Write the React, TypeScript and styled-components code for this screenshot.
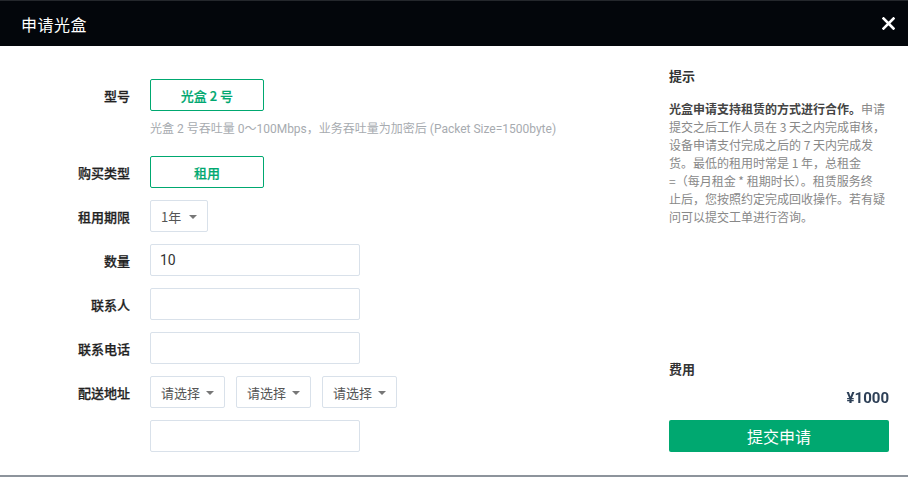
import React from 'react';
import styled, { createGlobalStyle } from 'styled-components';

const GREEN = '#00a870';

const GlobalStyle = createGlobalStyle`
  html, body {
    margin: 0;
    padding: 0;
    background: #ffffff;
  }
  body {
    font-family: "Noto Sans CJK SC", "Noto Sans", sans-serif;
    color: #333;
  }
  * { box-sizing: border-box; }
`;

const Dialog = styled.div`
  width: 908px;
  height: 477px;
  display: flex;
  flex-direction: column;
  background: #fff;
  border-bottom: 2px solid #8d949c;
`;

const Header = styled.div`
  height: 46px;
  flex-shrink: 0;
  background: #03060b;
  border-top: 1px solid #24272c;
  display: flex;
  align-items: center;
  justify-content: space-between;
  padding: 0 12px 0 21px;
`;

const Title = styled.div`
  color: #fff;
  font-size: 16px;
  letter-spacing: 0.5px;
`;

const Close = styled.button`
  background: none;
  border: none;
  padding: 0;
  width: 16px;
  height: 16px;
  display: flex;
  align-items: center;
  justify-content: center;
  cursor: pointer;
`;

const Body = styled.div`
  flex: 1;
  display: flex;
  justify-content: space-between;
  padding: 33px 19px 0 0;
`;

const Form = styled.div`
  display: grid;
  grid-template-columns: 130px auto;
  column-gap: 20px;
  row-gap: 12px;
  align-content: start;
`;

const Label = styled.div`
  height: 32px;
  display: flex;
  align-items: center;
  justify-content: flex-end;
  font-size: 13px;
  font-weight: 500;
  color: #222;
  -webkit-text-stroke: 0.25px #222;
`;

const Field = styled.div`
  display: flex;
  flex-direction: column;
`;

const Choice = styled.div`
  width: 114px;
  height: 32px;
  border: 1px solid ${GREEN};
  border-radius: 2px;
  color: ${GREEN};
  font-size: 13px;
  font-weight: 500;
  -webkit-text-stroke: 0.2px ${GREEN};
  display: flex;
  align-items: center;
  justify-content: center;
`;

const Hint = styled.div`
  margin-top: 8px;
  margin-bottom: 8px;
  font-size: 12px;
  color: #a7abb0;
  font-family: Roboto, "Noto Sans CJK SC", sans-serif;
  white-space: nowrap;
`;

const Input = styled.div`
  width: 210px;
  height: 32px;
  border: 1px solid #d9e1ea;
  border-radius: 2px;
  padding: 0 9px;
  display: flex;
  align-items: center;
  font-size: 14px;
  color: #333;
  font-family: Roboto, "Noto Sans CJK SC", sans-serif;
`;

const Selects = styled.div`
  display: flex;
  gap: 11px;
`;

const Select = styled.div<{ $w: number }>`
  width: ${p => p.$w}px;
  height: 32px;
  border: 1px solid #d9e1ea;
  border-radius: 2px;
  padding: 0 10px;
  display: flex;
  align-items: center;
  justify-content: space-between;
  font-size: 13px;
  color: #555;
`;

const Caret = styled.span`
  width: 0;
  height: 0;
  border-left: 4px solid transparent;
  border-right: 4px solid transparent;
  border-top: 4px solid #777;
  margin-top: 2px;
`;

const Side = styled.div`
  width: 220px;
  display: flex;
  flex-direction: column;
  padding-bottom: 23px;
`;

const SideTitle = styled.div`
  font-size: 13px;
  font-weight: 700;
  color: #333;
  line-height: 20px;
  margin-top: -13px;
`;

const Tip = styled.p`
  margin: 14px 0 0;
  font-size: 12px;
  line-height: 18px;
  color: #888;
  white-space: nowrap;
  b {
    color: #444;
    font-weight: 700;
  }
`;

const Spacer = styled.div`
  flex: 1;
`;

const Price = styled.div`
  text-align: right;
  font-size: 15px;
  font-weight: 700;
  color: #2e4057;
  margin: 10px 0 13px;
  font-family: Roboto, sans-serif;
  filter: blur(0.6px);
`;

const Submit = styled.button`
  width: 220px;
  height: 32px;
  border: none;
  border-radius: 2px;
  background: ${GREEN};
  color: #fff;
  font-size: 16px;
  font-family: "Noto Sans CJK SC", sans-serif;
  cursor: pointer;
`;

export default function App() {
  return (
    <>
      <GlobalStyle />
      <Dialog>
        <Header>
          <Title>申请光盒</Title>
          <Close aria-label="关闭">
            <svg width="13" height="13" viewBox="0 0 13 13">
              <path d="M1.5 1.5 L11.5 11.5 M11.5 1.5 L1.5 11.5" stroke="#fff" strokeWidth="2.6" strokeLinecap="square" />
            </svg>
          </Close>
        </Header>
        <Body>
          <Form>
            <Label>型号</Label>
            <Field>
              <Choice>光盒 2 号</Choice>
              <Hint>光盒 2 号吞吐量 0～100Mbps，业务吞吐量为加密后 (Packet Size=1500byte)</Hint>
            </Field>
            <Label>购买类型</Label>
            <Field>
              <Choice>租用</Choice>
            </Field>
            <Label>租用期限</Label>
            <Field>
              <Select $w={58}>1年<Caret /></Select>
            </Field>
            <Label>数量</Label>
            <Input>10</Input>
            <Label>联系人</Label>
            <Input />
            <Label>联系电话</Label>
            <Input />
            <Label>配送地址</Label>
            <Selects>
              <Select $w={75}>请选择<Caret /></Select>
              <Select $w={75}>请选择<Caret /></Select>
              <Select $w={75}>请选择<Caret /></Select>
            </Selects>
            <div />
            <Input />
          </Form>
          <Side>
            <SideTitle>提示</SideTitle>
            <Tip>
              <b>光盒申请支持租赁的方式进行合作。</b>申请<br />
              提交之后工作人员在 3 天之内完成审核，<br />
              设备申请支付完成之后的 7 天内完成发<br />
              货。最低的租用时常是 1 年，总租金<br />
              =（每月租金 * 租期时长）。租赁服务终<br />
              止后，您按照约定完成回收操作。若有疑<br />
              问可以提交工单进行咨询。
            </Tip>
            <Spacer />
            <SideTitle>费用</SideTitle>
            <Price>¥1000</Price>
            <Submit>提交申请</Submit>
          </Side>
        </Body>
      </Dialog>
    </>
  );
}
